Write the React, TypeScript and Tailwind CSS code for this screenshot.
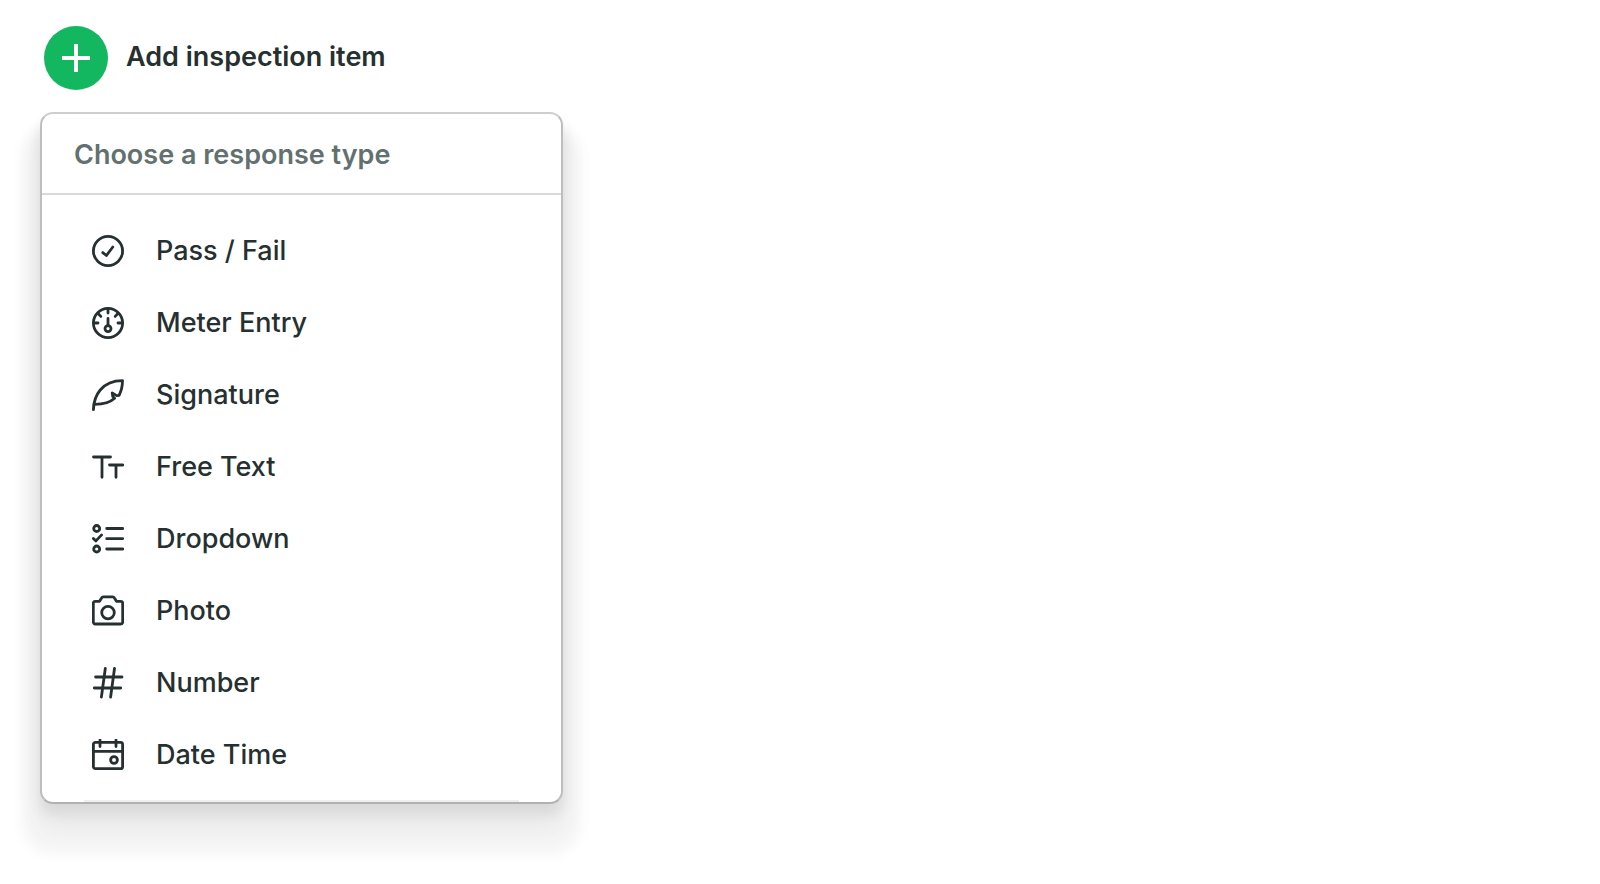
import React from 'react';

const responseTypes = [
  {
    label: 'Pass / Fail',
    icon: (
      <>
        <circle cx="16" cy="16" r="14.6" />
        <path d="M10.8 17.6l3.6 2.9L20.8 12" />
      </>
    ),
  },
  {
    label: 'Meter Entry',
    icon: (
      <>
        <circle cx="16" cy="16" r="14.6" />
        <circle cx="16" cy="21.6" r="3" />
        <path d="M16 11.4v7M16 2v4M2 16h4M26 16h4M6.6 7l2.2 2.4M25.4 7l-2.2 2.4" />
      </>
    ),
  },
  {
    label: 'Signature',
    icon: (
      <path d="M1.4 30.6C1.8 17 9.5 1.6 30.5 1.6c0 5.4-1.2 10.4-3.4 14.8l-2.4.2-4.5-2.7.6 3.7 1.8 1.7C18 23.7 11 25.2 2.6 25.4" />
    ),
  },
  {
    label: 'Free Text',
    icon: <path d="M1.5 6h17M10 6v20.3M17.5 14h13.2M24 14v12.3" />,
  },
  {
    label: 'Dropdown',
    icon: (
      <>
        <circle cx="4.7" cy="5.5" r="3" />
        <circle cx="4.7" cy="26" r="3" />
        <path d="M1.4 15.4l2.5 2.5 5.7-6M14.7 5.5h16M14.7 15.7h16M14.7 26h16" />
      </>
    ),
  },
  {
    label: 'Photo',
    icon: (
      <>
        <path d="M3.3 6.3h4.2l2.3-3.6c.3-.6.7-.9 1.4-.9h9.6c.7 0 1.1.3 1.4.9l2.3 3.6h4.2c1.1 0 2 .9 2 2V27c0 1.1-.9 2-2 2H3.3c-1.1 0-2-.9-2-2V8.300c0-1.100.9-2 2-2z" />
        <circle cx="16" cy="17.6" r="6.3" />
      </>
    ),
  },
  {
    label: 'Number',
    icon: <path d="M13.3 1.5L9.4 30M22.5 1.5L18.6 30M3.6 10H30M2.3 21h26.4" />,
  },
  {
    label: 'Date Time',
    icon: (
      <>
        <rect x="1.4" y="3.3" width="29.2" height="26.4" rx="2" />
        <path d="M8 1v6.5M24 1v6.5M1.4 12.3h29.2" />
        <circle cx="22" cy="21" r="3.4" />
      </>
    ),
  },
];

export default function App() {
  return (
    <main className="min-h-screen bg-white px-10 pt-[26px] pb-20 font-['Inter',sans-serif] text-[27px] leading-9 text-[#263030]">
      {/* Trigger */}
      <button type="button" className="flex items-center pl-1 font-semibold">
        <span className="flex size-16 items-center justify-center rounded-full bg-[#13b760]">
          <svg viewBox="0 0 28 28" className="size-7" fill="none" stroke="white" strokeWidth="4">
            <path d="M14 0v28M0 14h28" />
          </svg>
        </span>
        <span className="pb-0.5 pl-[18px]">Add inspection item</span>
      </button>

      {/* Response type menu */}
      <section className="mt-[22px] w-full max-w-[523px] rounded-[13px] border-2 border-[#bdbebe] border-t-[#cdcecd] border-b-[#b0b1b1] bg-white shadow-[0_32px_14px_18px_rgba(0,0,0,0.045),0_20px_24px_4px_rgba(0,0,0,0.045),0_10px_14px_rgba(0,0,0,0.08)]">
        <h2 className="border-b-2 border-[#d8dada] px-8 pt-[23px] pb-5 font-semibold text-[#637070]">
          Choose a response type
        </h2>
        <ul className="pt-5 pb-[9px]">
          {responseTypes.map((type) => (
            <li key={type.label}>
              <button type="button" className="flex h-[72px] w-full items-center gap-8 pl-[50px] text-left font-medium">
                <svg
                  viewBox="0 0 32 32"
                  className="size-8 shrink-0"
                  fill="none"
                  stroke="currentColor"
                  strokeWidth="2.8"
                  strokeLinecap="round"
                  strokeLinejoin="round"
                >
                  {type.icon}
                </svg>
                <span>{type.label}</span>
              </button>
            </li>
          ))}
        </ul>
        <div className="mx-[42px] h-0.5 bg-[#efefef]" />
      </section>
    </main>
  );
}
